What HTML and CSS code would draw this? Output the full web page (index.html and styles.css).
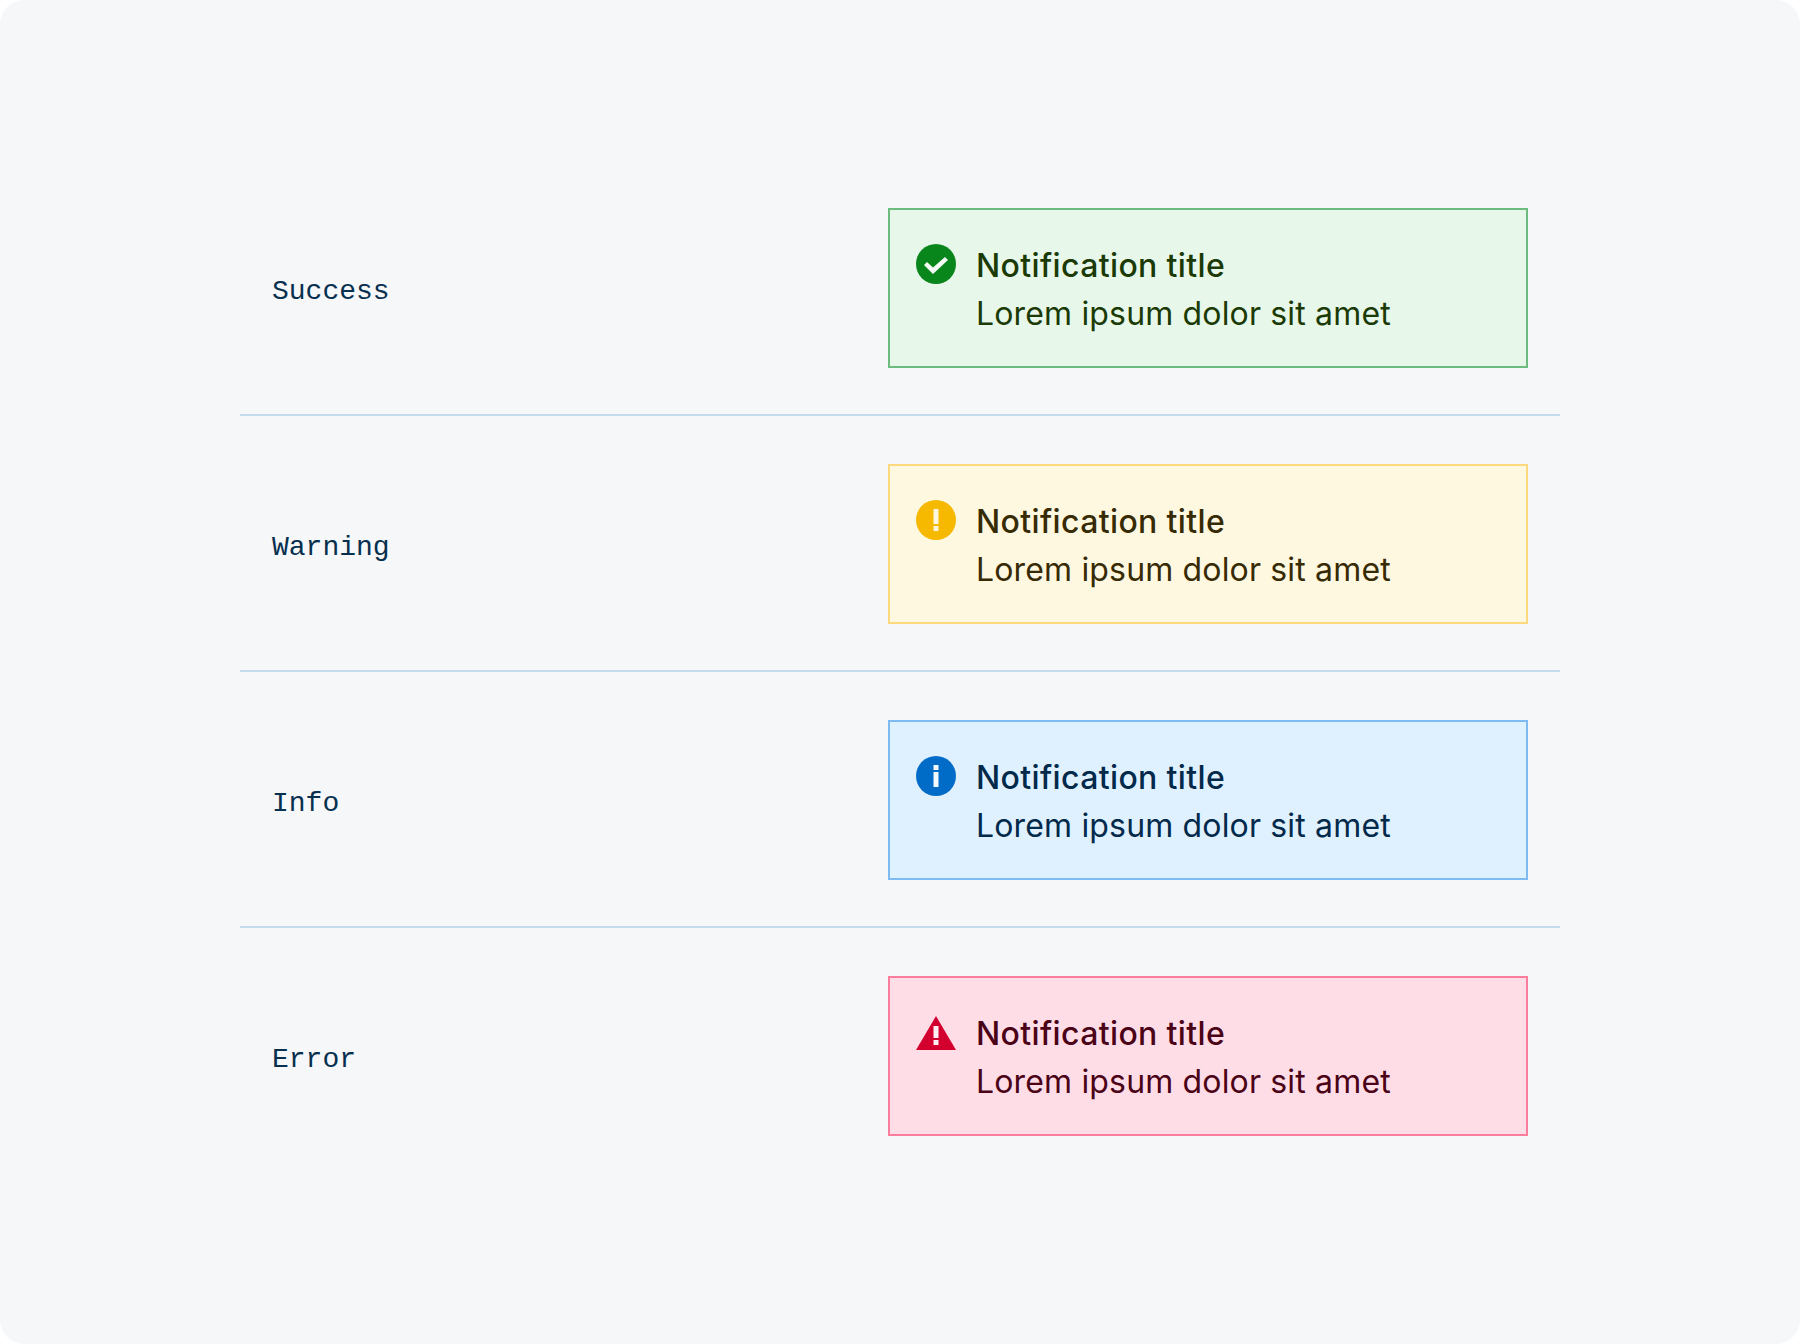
FILE: index.html
```html
<!DOCTYPE html>
<html lang="en">
<head>
<meta charset="utf-8">
<title>Notification variants</title>
<link rel="stylesheet" href="styles.css">
</head>
<body>
<main class="canvas">
  <section class="list">
    <div class="row">
      <code class="label">Success</code>
      <div class="note note-success">
        <svg class="icon" viewBox="0 0 40 40"><circle cx="20" cy="20" r="20" fill="#08851b"/><path d="M8 21l3-3 6 5.500 12-10.500 3 3-15 14z" fill="#f4fbf5"/></svg>
        <div class="copy"><div class="title">Notification title</div><div class="body">Lorem ipsum dolor sit amet</div></div>
      </div>
    </div>
    <div class="row">
      <code class="label">Warning</code>
      <div class="note note-warning">
        <svg class="icon" viewBox="0 0 40 40"><circle cx="20" cy="20" r="20" fill="#f6b900"/><path d="M17.500 9h5v15h-5zM17.500 26h5v5h-5z" fill="#fff8df"/></svg>
        <div class="copy"><div class="title">Notification title</div><div class="body">Lorem ipsum dolor sit amet</div></div>
      </div>
    </div>
    <div class="row">
      <code class="label">Info</code>
      <div class="note note-info">
        <svg class="icon" viewBox="0 0 40 40"><circle cx="20" cy="20" r="20" fill="#006cc8"/><path d="M17.500 9h5v5h-5zM17.500 16h5v15h-5z" fill="#f2f9ff"/></svg>
        <div class="copy"><div class="title">Notification title</div><div class="body">Lorem ipsum dolor sit amet</div></div>
      </div>
    </div>
    <div class="row">
      <code class="label">Error</code>
      <div class="note note-error">
        <svg class="icon" viewBox="0 0 40 40"><path d="M20 4l20 34H0z" fill="#d3002f"/><path d="M17.500 14h5v12h-5zM17.500 28h5v5h-5z" fill="#ffeef2"/></svg>
        <div class="copy"><div class="title">Notification title</div><div class="body">Lorem ipsum dolor sit amet</div></div>
      </div>
    </div>
  </section>
</main>
</body>
</html>
```

FILE: styles.css
```css
* { box-sizing: border-box; }
html, body { margin: 0; background: #fff; }
.canvas {
  width: 1800px;
  height: 1344px;
  padding: 160px 240px 0;
  background: #f6f7f9;
  border-radius: 24px;
}
.list { display: flex; flex-direction: column; }
.row {
  display: flex;
  align-items: center;
  justify-content: space-between;
  padding: 48px 32px 46px;
  border-bottom: 2px solid #c3dcec;
}
.row:last-child { border-bottom: 0; }
.label {
  font-family: "Liberation Mono", monospace;
  font-size: 28px;
  line-height: 36px;
  color: #07304f;
  position: relative;
  top: 4px;
}
.note {
  display: flex;
  gap: 20px;
  width: 640px;
  height: 160px;
  padding: 30px 26px;
  border: 2px solid;
  font-family: Inter, sans-serif;
  font-size: 32px;
  line-height: 48px;
}
.icon { flex: none; width: 40px; height: 40px; margin-top: 4px; }
.copy { padding-top: 2px; }
.title { font-weight: 500; letter-spacing: 0.37px; }
.body { font-weight: 400; letter-spacing: 0.16px; }
.note-success { background: #e7f8ea; border-color: #6cbb7f; color: #1b3a05; }
.note-warning { background: #fff8e0; border-color: #ffd97d; color: #372b05; }
.note-info { background: #dff1ff; border-color: #7dbcf3; color: #03294b; }
.note-error { background: #ffdde6; border-color: #fb7d9e; color: #4b0317; }
```
